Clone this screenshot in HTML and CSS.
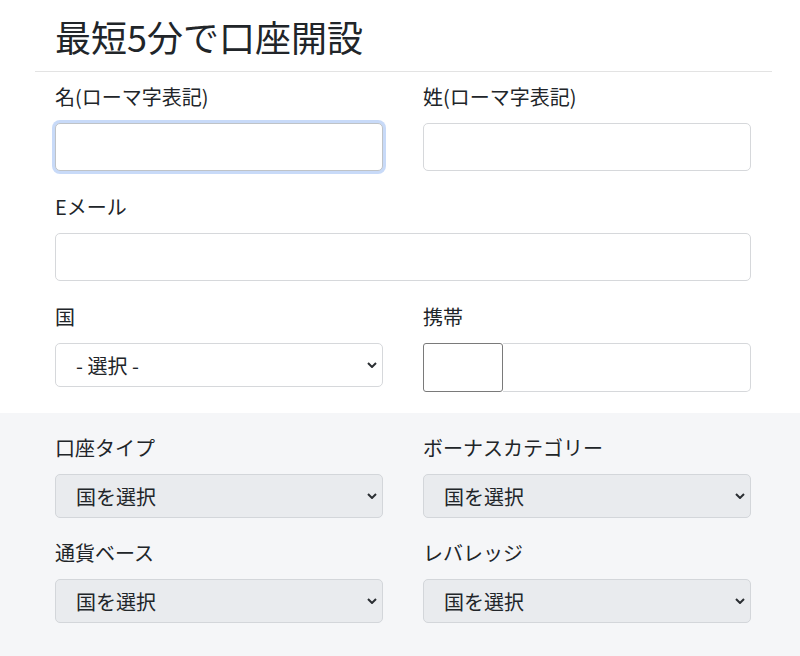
FILE: index.html
```html
<!DOCTYPE html>
<html lang="ja">
<head>
    <meta charset="UTF-8">
    <meta name="viewport" content="width=device-width, initial-scale=1.0">
    <title>口座開設</title>
    <link rel="stylesheet" href="styles.css">
</head>

<body>
    <div class="head">
        <h1>最短5分で口座開設</h1>
    </div>

    <form class="form">
        <div class="block">
            <div class="row">
                <div class="field">
                    <label>名(ローマ字表記)</label>
                    <input type="text" class="input is-focus">
                </div>
                <div class="field">
                    <label>姓(ローマ字表記)</label>
                    <input type="text" class="input">
                </div>
            </div>

            <div class="field">
                <label>Eメール</label>
                <input type="email" class="input">
            </div>

            <div class="row last">
                <div class="field">
                    <label>国</label>
                    <div class="sel">
                        <select>
                            <option>- 選択 -</option>
                        </select>
                        <svg viewBox="0 0 10 6"><polyline points="1,1 5,5 9,1"/></svg>
                    </div>
                </div>
                <div class="field">
                    <label>携帯</label>
                    <div class="tel">
                        <input type="text" class="code">
                        <input type="tel" class="input num">
                    </div>
                </div>
            </div>
        </div>

        <!-- 口座の設定 -->
        <div class="block gray">
            <div class="row">
                <div class="field">
                    <label>口座タイプ</label>
                    <div class="sel">
                        <select><option>国を選択</option></select>
                        <svg viewBox="0 0 10 6"><polyline points="1,1 5,5 9,1"/></svg>
                    </div>
                </div>
                <div class="field">
                    <label>ボーナスカテゴリー</label>
                    <div class="sel">
                        <select><option>国を選択</option></select>
                        <svg viewBox="0 0 10 6"><polyline points="1,1 5,5 9,1"/></svg>
                    </div>
                </div>
            </div>
            <div class="row">
                <div class="field">
                    <label>通貨ベース</label>
                    <div class="sel">
                        <select><option>国を選択</option></select>
                        <svg viewBox="0 0 10 6"><polyline points="1,1 5,5 9,1"/></svg>
                    </div>
                </div>
                <div class="field">
                    <label>レバレッジ</label>
                    <div class="sel">
                        <select><option>国を選択</option></select>
                        <svg viewBox="0 0 10 6"><polyline points="1,1 5,5 9,1"/></svg>
                    </div>
                </div>
            </div>
        </div>
    </form>
</body>
</html>
```

FILE: styles.css
```css
body, h1, form {
    margin: 0;
    padding: 0;
}
body {
    font-family: "Noto Sans CJK JP", "Noto Sans", sans-serif;
    color: #212529;
    background: #fff;
}

/* 見出しと下線 */
.head {
    width: 737px;
    margin-left: 35px;
    padding: 14px 0 13px;
    border-bottom: 1px solid #e3e3e3;
}
.head h1 {
    padding-left: 20px;
    font-size: 36px;
    font-weight: 400;
    line-height: 44px;
}

.block {
    padding: 10px 49px 21px 55px;
}
.block.gray {
    padding-top: 20px;
    padding-bottom: 40px;
    background: #f5f6f8;
}

.row {
    display: grid;
    grid-template-columns: 1fr 1fr;
    column-gap: 40px;
    align-items: start;
}

.field {
    margin-bottom: 21px;
}
.row.last .field {
    margin-bottom: 0;
}
.gray .row .field {
    margin-bottom: 20px;
}

label {
    display: block;
    margin-bottom: 11px;
    font-size: 20px;
    line-height: 30px;
}

.input {
    display: block;
    box-sizing: border-box;
    width: 100%;
    height: 48px;
    border: 1px solid #d6d8db;
    border-radius: 5px;
    background: #fff;
    outline: none;
    font: inherit;
}
.input.is-focus {
    border-color: #bfc3c7;
    box-shadow: 0 0 0 3px #c8daf8;
}

/* 電話番号：国番号 + 番号 */
.tel {
    display: flex;
    height: 49px;
}
.tel .code {
    box-sizing: border-box;
    width: 80px;
    height: 100%;
    border: 1px solid #7a7a7a;
    border-radius: 3px;
    background: #fff;
    outline: none;
}
.tel .num {
    flex: 1;
    height: 100%;
    border-left: none;
    border-radius: 0 5px 5px 0;
}

/* セレクト */
.sel {
    position: relative;
}
.sel select {
    display: block;
    box-sizing: border-box;
    width: 100%;
    height: 44px;
    padding: 0 30px 0 20px;
    border: 1px solid #d6d8db;
    border-radius: 5px;
    background: #fff;
    color: #212529;
    font: inherit;
    font-size: 20px;
    -webkit-appearance: none;
    appearance: none;
    outline: none;
}
.gray .sel select {
    border-color: #d3d6da;
    background: #e9ebee;
}
.sel svg {
    position: absolute;
    top: 19px;
    right: 6px;
    width: 10px;
    height: 6px;
    fill: none;
    stroke: #2b2f33;
    stroke-width: 2;
    pointer-events: none;
}
```
